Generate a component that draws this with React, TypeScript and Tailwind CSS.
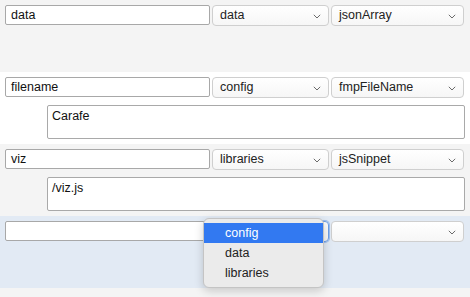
import React from "react";

type Row = {
  name: string;
  source: string;
  kind: string;
  detail?: string;
  bg: string;
  open?: boolean;
};

const rows: Row[] = [
  { name: "data", source: "data", kind: "jsonArray", bg: "bg-[#f4f4f4]" },
  { name: "filename", source: "config", kind: "fmpFileName", detail: "Carafe", bg: "bg-white" },
  { name: "viz", source: "libraries", kind: "jsSnippet", detail: "/viz.js", bg: "bg-[#f4f4f4]" },
  { name: "", source: "", kind: "", bg: "bg-[#e2eaf4]", open: true },
];

function Chevron() {
  return (
    <svg width="8" height="5" viewBox="0 0 8 5" className="pointer-events-none absolute top-[8px] right-[7px]" aria-hidden>
      <path d="M0.8 0.8 L4 4 L7.2 0.8" fill="none" stroke="#6b6b6b" strokeWidth="1" />
    </svg>
  );
}

function Select({ value, width, focused }: { value: string; width: string; focused?: boolean }) {
  return (
    <div
      className={`relative h-[21px] ${width} rounded-[4px] border bg-gradient-to-b from-white to-[#f6f6f6] pl-[7px] text-[12.5px] leading-[19px] text-[#222] ${
        focused ? "border-[#6d9fe6] shadow-[0_0_0_1px_#9fc0ef]" : "border-[#cfcfcf]"
      }`}
    >
      {value}
      <Chevron />
    </div>
  );
}

function Menu() {
  return (
    <div className="absolute top-[-3px] left-[-9px] z-10 h-[70px] w-[121px] rounded-[6px] border border-[#c4c4c4] bg-[#ebebeb] pt-[4px] text-[12.5px] text-[#222] shadow-[0_3px_10px_rgba(0,0,0,0.18)]">
      <div className="h-[20px] bg-[#3279f1] pl-[21px] leading-[20px] text-white">config</div>
      <div className="h-[20px] pl-[21px] leading-[20px]">data</div>
      <div className="h-[20px] pl-[21px] leading-[20px]">libraries</div>
    </div>
  );
}

export default function App() {
  return (
    <div className="h-[297px] w-[470px] overflow-hidden bg-[#f4f4f4] font-['Liberation_Sans',Arial,sans-serif]">
      {rows.map((r, i) => (
        <div key={i} className={`${r.bg} h-[72px] px-[5px] pt-[5px]`}>
          <div className="flex items-start">
            <div className="h-[20px] w-[205px] rounded-[2px] border border-[#a8a8a8] bg-white pl-[5px] text-[12.5px] leading-[18px] text-[#111]">
              {r.name}
            </div>
            <div className="relative ml-[2px]">
              <Select value={r.source} width="w-[117px]" focused={r.open} />
              {r.open && <Menu />}
            </div>
            <div className="ml-[2px]">
              <Select value={r.kind} width="w-[133px]" />
            </div>
          </div>
          {r.detail !== undefined && (
            <div className="mt-[7px] ml-[42px] h-[34px] w-[418px] rounded-[2px] border border-[#a9a9a9] bg-white px-[4px] pt-[2px] text-[12.5px] leading-[16px] text-[#111]">
              {r.detail}
            </div>
          )}
        </div>
      ))}
    </div>
  );
}
